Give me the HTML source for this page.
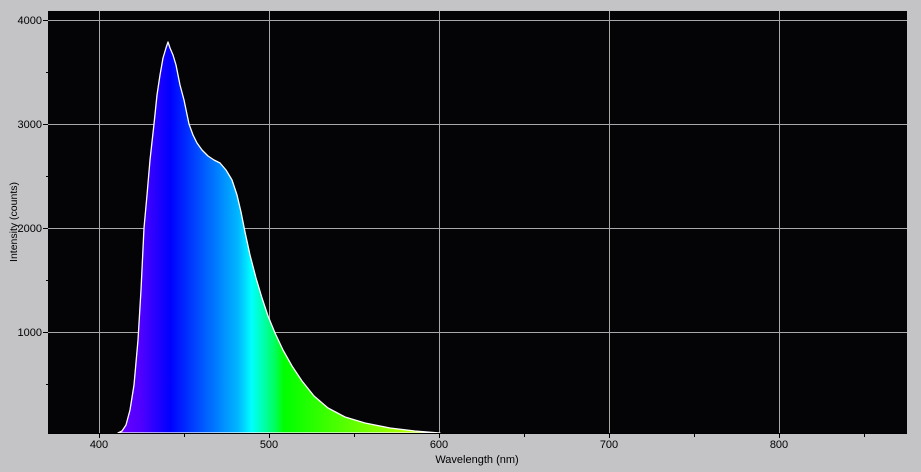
<!DOCTYPE html>
<html><head><style>
html,body{margin:0;padding:0;background:#c4c3c6;}
svg{display:block;}
text{font-family:"Liberation Sans",sans-serif;font-size:11px;fill:#000;}
</style></head><body>
<svg width="921" height="472" viewBox="0 0 921 472">
<defs>
<linearGradient id="g" gradientUnits="userSpaceOnUse" x1="115" y1="0" x2="440" y2="0">
<stop offset="0" stop-color="#7000ff"/>
<stop offset="0.08" stop-color="#5000ff"/>
<stop offset="0.17" stop-color="#0000ff"/>
<stop offset="0.38" stop-color="#00b8ff"/>
<stop offset="0.42" stop-color="#00ffff"/>
<stop offset="0.49" stop-color="#00ff60"/>
<stop offset="0.52" stop-color="#00ff00"/>
<stop offset="0.8" stop-color="#80ff00"/>
<stop offset="1" stop-color="#e0ff00"/>
</linearGradient>
</defs>
<rect x="0" y="0" width="921" height="472" fill="#c4c3c6"/>
<rect x="48" y="11" width="859" height="422" fill="#040306"/>
<g stroke="#a8a8a8" stroke-width="1">
<line x1="99.5" y1="11" x2="99.5" y2="433"/>
<line x1="269.5" y1="11" x2="269.5" y2="433"/>
<line x1="439.5" y1="11" x2="439.5" y2="433"/>
<line x1="609.5" y1="11" x2="609.5" y2="433"/>
<line x1="779.5" y1="11" x2="779.5" y2="433"/>
<line x1="48" y1="20.5" x2="907" y2="20.5"/>
<line x1="48" y1="124.5" x2="907" y2="124.5"/>
<line x1="48" y1="228.5" x2="907" y2="228.5"/>
<line x1="48" y1="332.5" x2="907" y2="332.5"/>
</g>
<path d="M118,433 L122,431 L126,425 L130,410 L134,385 L138,340 L141,290 L144,228 L147,195 L150,160 L154,124 L157,95 L160,75 L163,58 L166,48 L168,42 L170,48 L173,55 L176,65 L180,85 L184,100 L189,124 L193,135 L197,143 L202,150 L208,156 L214,160 L220,163 L226,170 L232,180 L237,195 L241,212 L245,232 L250,255 L256,278 L262,298 L268,316 L275,333 L283,350 L292,366 L302,381 L314,396 L328,408 L345,417 L365,423 L390,428 L415,431 L440,433 Z" fill="url(#g)" stroke="#ffffff" stroke-width="1.3" stroke-linejoin="round"/>
<g stroke="#000" stroke-width="1">
<line x1="48" y1="433.5" x2="907" y2="433.5"/>
<line x1="99.5" y1="433" x2="99.5" y2="438"/><line x1="184.5" y1="433" x2="184.5" y2="437"/>
<line x1="269.5" y1="433" x2="269.5" y2="438"/><line x1="354.5" y1="433" x2="354.5" y2="437"/>
<line x1="439.5" y1="433" x2="439.5" y2="438"/><line x1="524.5" y1="433" x2="524.5" y2="437"/>
<line x1="609.5" y1="433" x2="609.5" y2="438"/><line x1="694.5" y1="433" x2="694.5" y2="437"/>
<line x1="779.5" y1="433" x2="779.5" y2="438"/><line x1="864.5" y1="433" x2="864.5" y2="437"/>
<line x1="43" y1="20.5" x2="48" y2="20.5"/><line x1="46" y1="72.5" x2="48" y2="72.5"/>
<line x1="43" y1="124.5" x2="48" y2="124.5"/><line x1="46" y1="176.5" x2="48" y2="176.5"/>
<line x1="43" y1="228.5" x2="48" y2="228.5"/><line x1="46" y1="280.5" x2="48" y2="280.5"/>
<line x1="43" y1="332.5" x2="48" y2="332.5"/><line x1="46" y1="384.5" x2="48" y2="384.5"/>
</g>
<g text-anchor="end">
<text x="42" y="24">4000</text>
<text x="42" y="128">3000</text>
<text x="42" y="232">2000</text>
<text x="42" y="336">1000</text>
</g>
<g text-anchor="middle">
<text x="99" y="448">400</text>
<text x="269" y="448">500</text>
<text x="439" y="448">600</text>
<text x="609" y="448">700</text>
<text x="779" y="448">800</text>
<text x="477" y="463">Wavelength (nm)</text>
<text x="0" y="0" transform="translate(17,222) rotate(-90)" style="font-size:10.5px">Intensity (counts)</text>
</g>
</svg>
</body></html>
